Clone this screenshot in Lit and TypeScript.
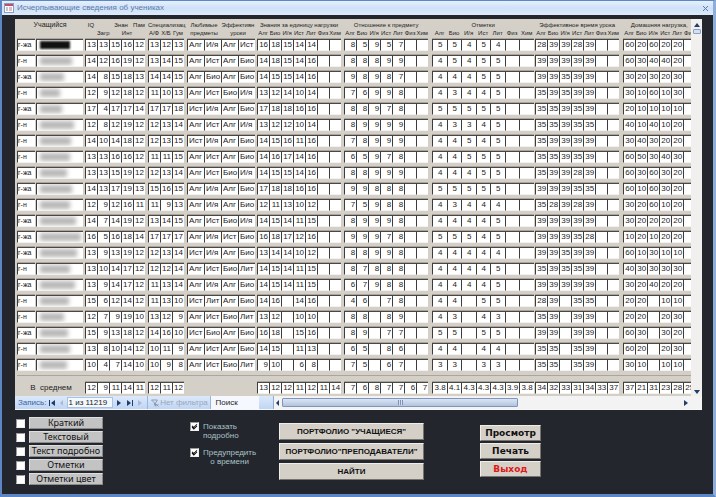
import { LitElement, html, css, svg, nothing } from "lit";
import { customElement } from "lit/decorators.js";
import { classMap } from "lit/directives/class-map.js";

// One pupil per line: title | IQ and abilities | specialisation | subjects |
// knowledge | attitude | marks | effective time | homework. "_" is an empty field.
const PUPILS = `
г-жа|13 13 15 16 12|13 12 13|Алг И/я Алг Ист|16 18 15 14 14|8 5 9 5 7|5 5 4 5 4|28 39 39 28 39|60 20 60 20 20
г-н|14 12 16 19 12|13 14 15|Алг Ист Алг Био|14 18 15 14 16|8 8 8 9 9|4 5 4 5 5|39 39 39 39 39|60 30 40 40 20
г-жа|14 8 15 18 13|14 14 15|Алг Био Алг Био|14 15 15 14 16|9 8 9 8 7|4 4 4 5 5|39 39 35 39 39|30 20 30 20 30
г-н|12 9 12 18 12|11 10 13|Алг Ист Био И/я|13 12 14 10 14|7 6 9 9 8|4 3 4 4 5|35 39 35 39 39|30 10 60 10 30
г-жа|17 4 17 17 14|17 17 18|Ист И/я Алг Био|17 18 18 16 16|8 8 9 7 8|5 5 5 5 5|35 35 39 35 39|20 10 10 10 10
г-н|12 8 12 19 12|12 13 14|Алг Ист Алг И/я|13 12 12 10 14|8 9 9 9 9|4 3 3 4 5|35 35 39 35 35|40 10 40 10 20
г-н|14 10 14 18 12|12 13 15|Ист И/я Алг Био|14 15 16 11 16|7 8 9 9 9|4 4 5 4 5|35 39 39 39 39|30 40 30 20 20
г-н|13 13 16 16 12|11 11 15|Алг Ист Алг Био|14 16 17 14 16|6 5 9 7 8|4 4 5 5 5|35 35 39 35 39|60 50 30 40 30
г-жа|13 13 15 19 12|12 13 14|Алг Ист Био И/я|14 15 15 14 16|8 8 9 9 9|4 4 4 5 5|35 39 39 28 39|60 30 60 30 20
г-жа|14 13 17 19 13|15 16 15|Алг И/я Алг Био|17 18 18 16 16|9 9 8 8 8|5 5 5 5 5|39 39 39 35 35|60 10 60 30 20
г-н|12 9 12 16 11|11 9 13|Алг И/я Алг Био|12 11 13 10 12|7 5 9 8 8|4 3 4 4 4|35 28 39 28 39|30 20 60 10 20
г-жа|14 7 14 19 12|13 14 15|Алг Ист Био И/я|14 15 14 11 15|8 9 9 9 8|4 4 4 4 5|39 39 39 39 39|30 20 20 20 20
г-жа|16 5 16 18 14|17 17 17|Алг И/я Ист Био|16 18 17 12 16|9 9 9 7 8|5 5 5 4 5|39 39 39 35 28|10 20 10 20 20
г-жа|13 9 13 19 12|12 13 14|Ист И/я Алг Био|13 14 14 10 12|8 8 9 9 8|4 4 4 4 4|39 39 35 39 39|60 10 30 10 10
г-н|13 10 14 17 12|12 12 14|Алг Ист Био Лит|14 15 14 11 15|8 7 8 8 8|4 4 4 4 5|35 39 35 35 39|40 30 30 30 30
г-жа|13 9 14 17 12|11 13 14|Алг И/я Алг Био|14 15 14 11 15|6 7 9 8 8|4 4 4 4 5|39 39 39 39 39|30 20 40 20 20
г-н|15 6 12 14 12|11 13 10|Ист Лит Алг Био|14 16 _ 14 16|4 6 _ 7 8|4 4 _ 5 5|28 39 _ 35 35|20 20 _ 10 10
г-н|12 7 9 19 10|13 12 9|Алг Ист Био Лит|13 12 _ 10 10|8 8 _ 8 9|4 3 _ 4 3|35 39 _ 39 39|20 20 _ 20 30
г-жа|15 9 13 18 12|14 16 10|Ист Био Алг Био|16 18 _ 15 16|8 9 _ 7 7|5 5 _ 5 5|39 39 _ 39 39|60 30 _ 30 20
г-н|13 8 10 14 12|10 11 9|Алг Ист Алг Био|14 15 _ 11 13|6 5 _ 8 6|4 4 _ 4 4|35 35 _ 35 39|60 20 _ 20 30
г-н|10 4 7 14 10|10 9 8|Алг Ист Био Лит|9 10 _ 6 8|7 5 _ 6 7|3 3 _ 3 3|35 35 _ 35 39|30 10 _ 10 10`
  .trim()
  .split("\n")
  .map((line) => line.split("|").map((part) => part.split(" ")));

const AVERAGES = [
  "12 9 11 14 11",
  "12 11 12",
  "",
  "13 12 12 11 12 11 14",
  "7 6 8 7 7 6 7",
  "3.8 4.1 4.3 4.3 4.3 3.9 3.8",
  "34 32 33 31 34 33 37",
  "37 21 31 23 28 25 24",
].map((part) => (part ? part.split(" ") : []));

const SUBJECTS = ["Алг", "Био", "И/я", "Ист", "Лит", "Физ", "Хим"];

// Field groups after the name: cell count, column class, text alignment, gap class after it.
const GROUPS = [
  { n: 5, col: "c-num", align: "right", gap: "g-3" },
  { n: 3, col: "c-num", align: "right", gap: "g-3" },
  { n: 4, col: "c-word", align: "left", gap: "g-2" },
  { n: 7, col: "c-num", align: "right", gap: "g-3" },
  { n: 7, col: "c-num", align: "right", gap: "g-4" },
  { n: 7, col: "c-mark", align: "mid", gap: "g-1" },
  { n: 7, col: "c-num", align: "right", gap: "g-4" },
  { n: 7, col: "c-num", align: "right", gap: "g-1" },
];

const NAME_LENGTHS = [30, 32, 24, 20, 22, 34, 31, 30, 27, 32, 30, 36, 41, 37, 30, 35, 29, 24, 28, 30, 27];

const range = (n: number) => Array.from({ length: n }, (_, i) => i);

const arrow = (d: string) => html`<svg class="arrow" viewBox="0 0 8 8" aria-hidden="true">${svg`<path d=${d} />`}</svg>`;
const FIRST = "M1 1h1v6h-1zM7 1v6l-4-3z";
const PREV = "M5 1v6l-3-3z";
const NEXT = "M2 1v6l4-3z";
const LAST = "M1 1v6l4-3zM6 1h1v6h-1z";
const UP = "M1 6h6l-3-4z";
const DOWN = "M1 2h6l-3 4z";

@customElement("pupil-table")
export class PupilTable extends LitElement {
  static styles = css`
    :host { display: block; font: 8px/10px "Liberation Sans", Arial, sans-serif; color: #222; }
    table { border-collapse: collapse; table-layout: fixed; width: 0; }
    th, td { padding: 0; font-weight: normal; white-space: nowrap; }
    .c-title { width: 18px; }
    .c-name { width: 47px; }
    .c-num { width: 12px; }
    .c-word { width: 17px; }
    .c-mark { width: 15px; }
    .c-mark-s { width: 14px; }
    .g-1 { width: 1px; }
    .g-2 { width: 2px; }
    .g-3 { width: 3px; }
    .g-4 { width: 4px; }
    .heads th { height: 8px; font-size: 6px; line-height: 8px; color: #222; }
    .heads .top th { height: 10px; line-height: 8px; vertical-align: bottom; }
    .heads .top .pupil { font-size: 7px; }
    .lead td { height: 2px; }
    .row td { height: 16px; vertical-align: top; }
    .box {
      display: block; height: 10px; overflow: hidden; background: #fff;
      border: solid #3c3c3c; border-width: 1px 0 1px 1px;
      border-top-color: #4a4845; border-bottom-color: #f4f2ee;
      box-shadow: 0 -1px 0 #aaa69f;
    }
    .box.right { text-align: right; padding-right: 1px; }
    .box.left { padding-left: 1px; }
    .box.mid { text-align: center; }
    .box.title { font-size: 7px; }
    .smudge { display: block; height: 8px; margin: 1px 0 0 3px; background: #b8b8b8; filter: blur(2px); }
    .smudge.dark { background: #111; filter: blur(1px); }
    .avg td { height: 14px; vertical-align: top; border-top: 1px solid #aaa69d; padding-top: 6px; }
    .avg .label { text-align: center; line-height: 11px; }
  `;

  private fields(groups: string[][], fill: boolean) {
    return GROUPS.map((g, k) => html`
      ${range(g.n).map((i) => {
        const value = groups[k][i];
        return html`<td>${value || fill
          ? html`<span class="box ${g.align}">${value === "_" ? nothing : value}</span>`
          : nothing}</td>`;
      })}<td></td>`);
  }

  render() {
    return html`
      <table>
        <colgroup>
          <col class="c-title"><col class="g-1"><col class="c-name"><col class="g-2">
          ${GROUPS.map((g) => html`${range(g.n).map((i) => html`<col class=${g.col === "c-mark" && i % 2 ? "c-mark-s" : g.col}>`)}<col class=${g.gap}>`)}
        </colgroup>
        <thead class="heads">
          <tr class="top">
            <th class="pupil" colspan="3">Учащийся</th><th></th>
            <th>IQ</th><th></th><th colspan="2">Знан</th><th>Пам</th><th></th>
            <th colspan="3">Специализац</th><th></th>
            <th colspan="2">Любимые</th><th colspan="2">Эффективн</th><th></th>
            <th colspan="7">Знания за единицу нагрузки</th><th></th>
            <th colspan="7">Отношение к предмету</th><th></th>
            <th colspan="7">Отметки</th><th></th>
            <th colspan="7">Эффективное время урока</th><th></th>
            <th colspan="6">Домашняя нагрузка,</th><th></th><th></th>
          </tr>
          <tr>
            <th colspan="4"></th>
            <th></th><th>Загр</th><th></th><th>Инт</th><th></th><th></th>
            <th>А/Ф</th><th>Х/Б</th><th>Гум</th><th></th>
            <th colspan="2">предметы</th><th colspan="2">уроки</th><th></th>
            ${range(5).map(() => html`${SUBJECTS.map((s) => html`<th>${s}</th>`)}<th></th>`)}
          </tr>
        </thead>
        <tbody>
          <tr class="lead"><td colspan="59"></td></tr>
          ${PUPILS.map(([title, ...groups], r) => html`
            <tr class="row">
              <td><span class="box title">${title[0]}</span></td><td></td>
              <td><span class="box"><span class=${classMap({ smudge: true, dark: r === 0 })} style="width:${NAME_LENGTHS[r]}px"></span></span></td><td></td>
              ${this.fields(groups, true)}
            </tr>`)}
        </tbody>
        <tfoot>
          <tr class="avg">
            <td class="label" colspan="4">В&nbsp; среднем</td>
            ${this.fields(AVERAGES, false)}
          </tr>
        </tfoot>
      </table>`;
  }
}

@customElement("app-root")
export class AppRoot extends LitElement {
  static styles = css`
    :host { display: block; font: 8px/9px "Liberation Sans", Arial, sans-serif; color: #222; }
    button, input { font: inherit; color: inherit; margin: 0; padding: 0; border: 0; border-radius: 0; box-sizing: border-box; }
    .window {
      display: flex; flex-direction: column; min-height: 100vh; box-sizing: border-box;
      border: solid #5c86c4; border-width: 1px 3px 3px 2px; border-right-color: #8eaedb; background: #23262c;
    }
    .bar {
      display: flex; align-items: center; gap: 3px; height: 14px; padding: 0 4px 0 2px;
      background: linear-gradient(#e6f0fc, #cfe1f8 50%, #dceafb);
    }
    .app-icon { width: 10px; height: 10px; }
    .bar h1 { flex: 1; margin: 0; font: 8px/12px "Liberation Sans", Arial, sans-serif; color: #5b7ba8; }
    .close { display: flex; background: none; }
    .close svg { width: 7px; height: 7px; stroke: #5a7cab; stroke-width: 1; fill: none; }
    .sheet { margin: 4px 11px 0 13px; background: #d4d0c8; border-bottom: 1px solid #f7f7f7; }
    .view { display: flex; }
    .fields { flex: 1; min-width: 0; overflow: hidden; padding-left: 2px; }
    .vscroll { display: flex; flex-direction: column; align-items: center; width: 11px; background: #f1f0ee; padding-top: 2px; box-sizing: border-box; }
    .arrow { display: block; width: 8px; height: 8px; fill: #223c6c; }
    .vthumb { width: 8px; height: 5px; box-sizing: border-box; background: #d4dff2; border: 1px solid #8ba0c6; border-radius: 1px; }
    .grow { flex: 1; }
    .nav { display: flex; align-items: stretch; height: 13px; background: linear-gradient(#dce9fa, #bfd6f5); color: #3c62a0; line-height: 13px; }
    .nav button { display: flex; align-items: center; justify-content: center; width: 12px; background: none; }
    .nav button.slim { width: 10px; }
    .nav button:disabled .arrow { fill: #a9bad4; }
    .nav label { padding: 0 1px 0 3px; }
    .nav .record { width: 46px; margin: 1px 0; background: #f3f8ff; color: #222; border: 1px solid #a9c1e4; }
    .nav .filter { width: 64px; gap: 1px; border: solid #9ab4dc; border-width: 0 1px; color: #98a6bb; margin-left: 2px; white-space: nowrap; }
    .filter svg { width: 8px; height: 8px; fill: none; stroke: #8f9db3; }
    .nav .search { width: 48px; padding-left: 4px; background: #f5f9ff; color: #222; }
    .hscroll { display: flex; flex: 1; align-items: center; margin-left: 14px; border-left: 1px solid #8fa9d4; background: #f3f3f4; padding-right: 12px; }
    .htrack { flex: 1; display: flex; }
    .hthumb {
      width: 59%; height: 9px; box-sizing: border-box; border: 1px solid #7e95bd; border-radius: 1px;
      background: linear-gradient(#dbe4f3, #b3c4e0); display: flex; justify-content: center; align-items: center;
    }
    .grip { width: 5px; height: 5px; background: repeating-linear-gradient(90deg, #7e92b4 0 1px, #d5dfef 1px 2px); }
    .controls { display: grid; grid-template-columns: 174fr 89fr 201fr 233fr; align-items: start; padding: 7px 0 8px 14px; color: #111; }
    .reports { display: grid; gap: 2px; justify-content: start; }
    .report { display: grid; grid-template-columns: 9px 74px; gap: 4px; align-items: center; height: 12px; }
    .plate { height: 12px; box-sizing: border-box; background: #c3c3c3; border: 1px solid #dedede; border-right-color: #8a8a8a; border-bottom-color: #8a8a8a; text-align: center; font: 9px/10px "Noto Sans", "DejaVu Sans", sans-serif; white-space: nowrap; }
    .tick { appearance: none; width: 9px; height: 9px; background: #fff; border: 1px solid #9a9a9a; border-right-color: #eee; border-bottom-color: #eee; display: grid; }
    .tick:checked::after { content: ""; width: 4px; height: 2px; margin: 1px; border: solid #111; border-width: 0 0 1px 1px; box-shadow: -1px 1px 0 #111; transform: rotate(-45deg); }
    .options { display: grid; gap: 8px; padding-top: 5px; }
    .option { display: flex; align-items: start; gap: 4px; color: #a9c4c9; text-align: center; white-space: nowrap; }
    .option.left { text-align: left; }
    .stack { display: grid; gap: 3px; justify-items: start; padding-top: 6px; font-weight: bold; }
    .stack.close-set { gap: 2px; padding-top: 8px; }
    .push { width: 145px; height: 17px; background: #d4d0c8; border: 1px solid #f0eeea; border-right-color: #77746e; border-bottom-color: #77746e; line-height: 14px; white-space: nowrap; }
    .close-set .push { width: 61px; height: 16px; font: bold 9px/13px "DejaVu Sans", Verdana, sans-serif; }
    .close-set .exit { color: #e01818; }
  `;

  render() {
    const reports = ["Краткий", "Текстовый", "Текст подробно", "Отметки", "Отметки цвет"];
    return html`
      <main class="window">
        <header class="bar">
          <svg class="app-icon" viewBox="0 0 10 10" aria-hidden="true">
            <rect x=".5" y=".5" width="9" height="9" fill="#fff" stroke="#8b9dc0" />
            <path d="M1 1h8v2h-8z" fill="#c0506a" />
            <path d="M2 5h2M2 7h2" stroke="#8090b0" />
            <path d="M5 5h3M5 7h3" stroke="#c77a8c" />
          </svg>
          <h1>Исчерпывающие сведения об учениках</h1>
          <button class="close" aria-label="Закрыть"><svg viewBox="0 0 7 7"><path d="M1 1l5 5M6 1l-5 5" /></svg></button>
        </header>
        <section class="sheet">
          <div class="view">
            <div class="fields"><pupil-table></pupil-table></div>
            <div class="vscroll">${arrow(UP)}<div class="vthumb"></div><div class="grow"></div>${arrow(DOWN)}</div>
          </div>
          <nav class="nav">
            <label for="record">Запись:</label>
            <button class="slim" aria-label="Первая">${arrow(FIRST)}</button>
            <button class="slim" aria-label="Предыдущая" disabled>${arrow(PREV)}</button>
            <input class="record" id="record" value="1 из 11219">
            <button aria-label="Следующая">${arrow(NEXT)}</button>
            <button class="slim" aria-label="Последняя">${arrow(LAST)}</button>
            <button class="slim" aria-label="Новая" disabled>${arrow(NEXT)}</button>
            <button class="filter" disabled>
              <svg viewBox="0 0 8 8" aria-hidden="true"><path d="M.5 1h6l-2 3v3l-1-1v-2zM5 5l2.500 2.500M7.500 5l-2.500 2.500" /></svg>Нет фильтра
            </button>
            <input class="search" aria-label="Поиск" value="Поиск">
            <div class="hscroll">${arrow(PREV)}<div class="htrack"><div class="hthumb"><span class="grip"></span></div></div>${arrow(NEXT)}</div>
          </nav>
        </section>
        <section class="controls">
          <div class="reports">
            ${reports.map((name, i) => html`
              <div class="report"><input class="tick" type="checkbox" id="report-${i}"><label class="plate" for="report-${i}">${name}</label></div>`)}
          </div>
          <div class="options">
            <label class="option left"><input class="tick" type="checkbox" checked><span>Показать<br>подробно</span></label>
            <label class="option"><input class="tick" type="checkbox" checked><span>Предупредить<br>о времени</span></label>
          </div>
          <div class="stack">
            <button class="push">ПОРТФОЛИО "УЧАЩИЕСЯ"</button>
            <button class="push">ПОРТФОЛИО"ПРЕПОДАВАТЕЛИ"</button>
            <button class="push">НАЙТИ</button>
          </div>
          <div class="stack close-set">
            <button class="push">Просмотр</button>
            <button class="push">Печать</button>
            <button class="push exit">Выход</button>
          </div>
        </section>
      </main>`;
  }
}
